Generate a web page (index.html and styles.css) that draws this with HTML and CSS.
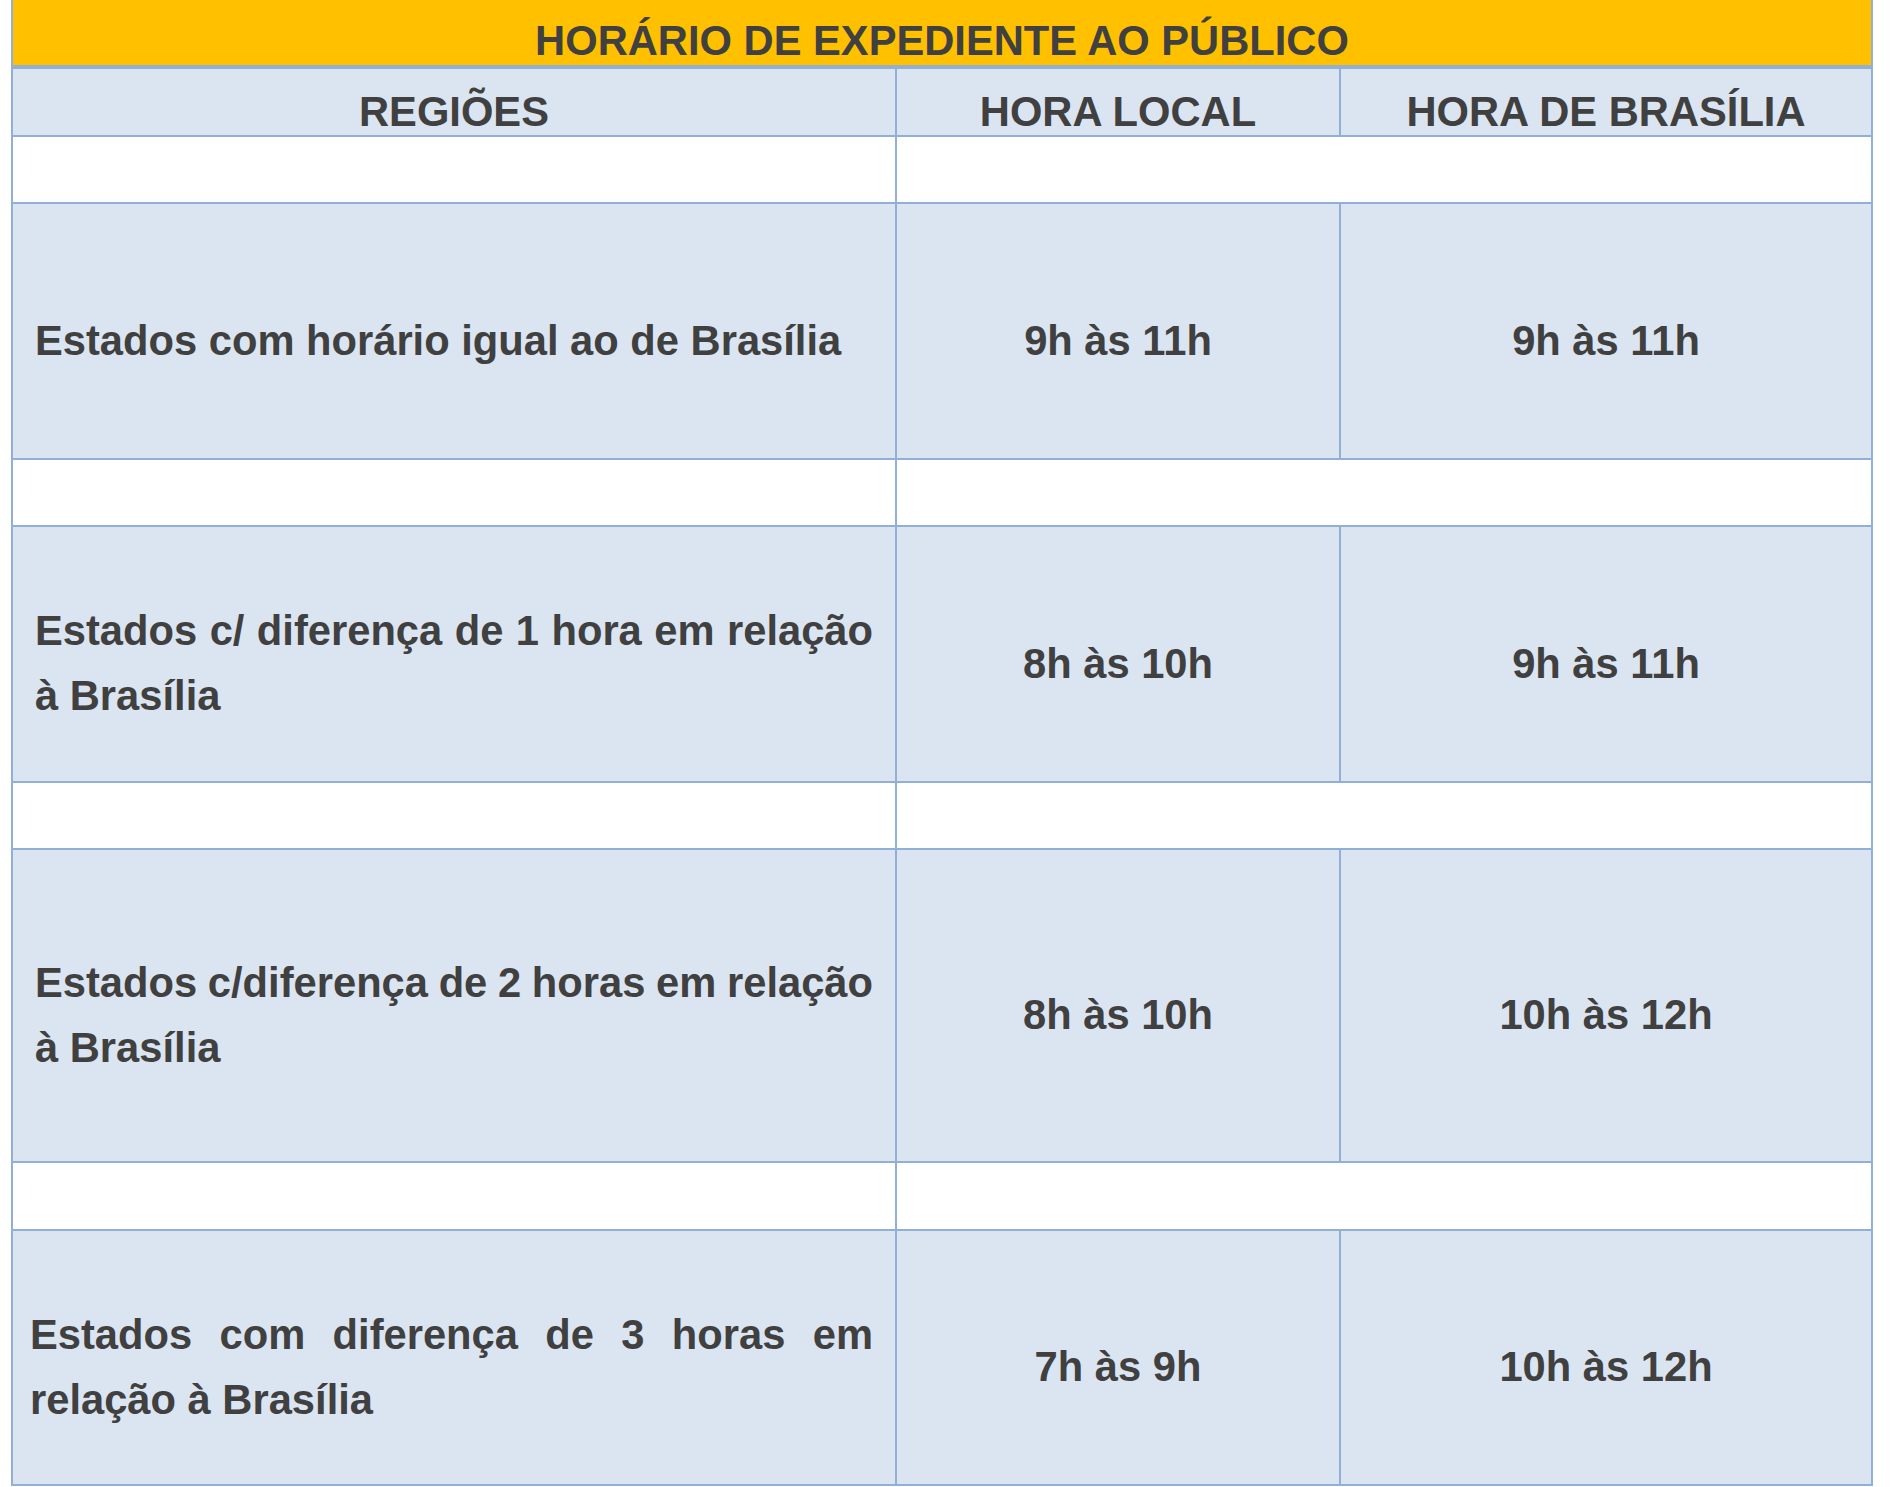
FILE: index.html
```html
<!DOCTYPE html>
<html lang="pt-BR">
<head>
<meta charset="utf-8">
<title>Horário de Expediente ao Público</title>
<link rel="stylesheet" href="styles.css">
</head>
<body>
<div class="sheet">
  <div class="title">HORÁRIO DE EXPEDIENTE AO PÚBLICO</div>

  <div class="cell head">REGIÕES</div>
  <div class="cell head">HORA LOCAL</div>
  <div class="cell head">HORA DE BRASÍLIA</div>

  <div class="cell blank"></div>
  <div class="cell blank wide"></div>

  <div class="cell label"><div class="line">Estados com horário igual ao de Brasília</div></div>
  <div class="cell time">9h às 11h</div>
  <div class="cell time">9h às 11h</div>

  <div class="cell blank"></div>
  <div class="cell blank wide"></div>

  <div class="cell label">
    <div class="line just">Estados c/ diferença de 1 hora em relação</div>
    <div class="line">à Brasília</div>
  </div>
  <div class="cell time">8h às 10h</div>
  <div class="cell time">9h às 11h</div>

  <div class="cell blank"></div>
  <div class="cell blank wide"></div>

  <div class="cell label">
    <div class="line just">Estados c/diferença de 2 horas em relação</div>
    <div class="line">à Brasília</div>
  </div>
  <div class="cell time">8h às 10h</div>
  <div class="cell time">10h às 12h</div>

  <div class="cell blank"></div>
  <div class="cell blank wide"></div>

  <div class="cell label narrow">
    <div class="line just">Estados com diferença de 3 horas em</div>
    <div class="line">relação à Brasília</div>
  </div>
  <div class="cell time">7h às 9h</div>
  <div class="cell time">10h às 12h</div>
</div>
</body>
</html>
```

FILE: styles.css
```css
html, body {
  margin: 0;
  padding: 0;
  background: #ffffff;
}

body {
  font-family: "Liberation Sans", Arial, sans-serif;
  font-weight: bold;
  font-size: 41.7px;
  color: #404040;
}

.sheet {
  margin-left: 11px;
  width: 1862px;
  box-sizing: border-box;
  padding: 0 2px 2px 2px;
  background: #92afd6;
  display: grid;
  grid-template-columns: 882px 442px 530px;
  grid-template-rows: 67px 66px 65px 254px 65px 254px 65px 311px 66px 253px;
  gap: 2px;
}

.title {
  grid-column: 1 / -1;
  margin-bottom: 2px;
  background: #ffc000;
  display: flex;
  align-items: center;
  justify-content: center;
  padding-top: 16px;
  box-sizing: border-box;
  line-height: 1;
  white-space: nowrap;
}

.cell {
  background: #dbe5f1;
  box-sizing: border-box;
  padding-top: 18px;
  display: flex;
  align-items: center;
  line-height: 65px;
  white-space: nowrap;
}

.head,
.time {
  justify-content: center;
}

.blank {
  background: #ffffff;
}

.blank.wide {
  grid-column: 2 / 4;
}

.label {
  flex-direction: column;
  align-items: stretch;
  justify-content: center;
  padding-left: 22px;
  padding-right: 22px;
}

.label.narrow {
  padding-left: 17px;
}

.line {
  display: block;
  text-align: left;
}

.line.just {
  text-align: justify;
  text-align-last: justify;
  word-spacing: -2px;
}
```
